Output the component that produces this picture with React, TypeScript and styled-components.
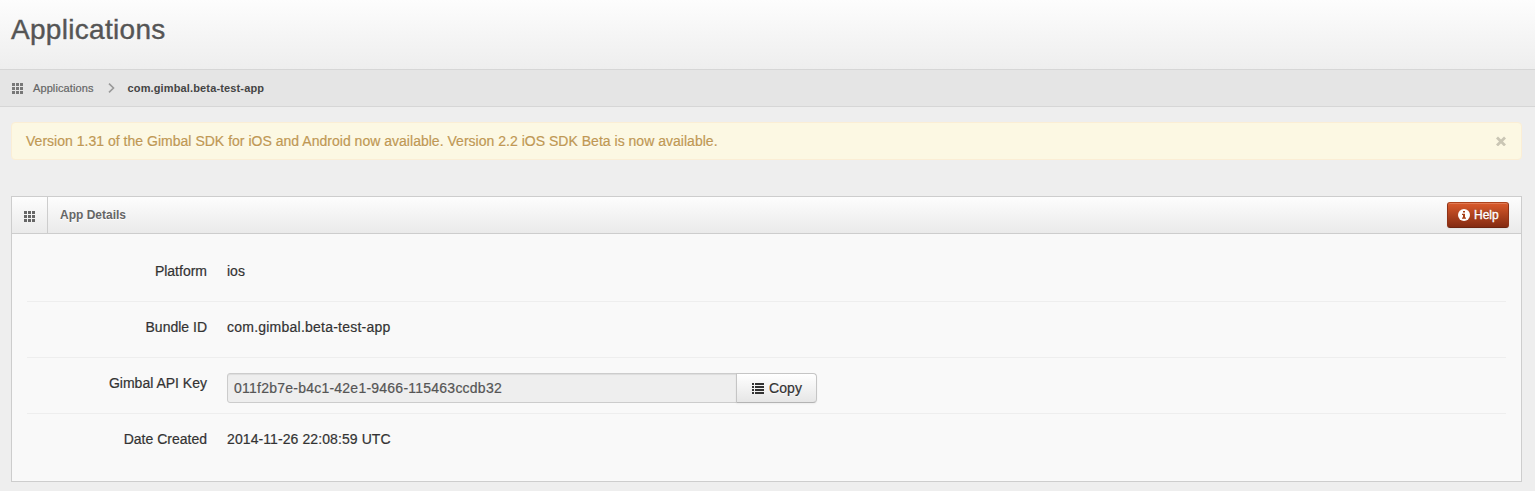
import React from "react";
import styled, { createGlobalStyle } from "styled-components";

const GlobalStyle = createGlobalStyle`
  * { box-sizing: border-box; }
  html, body { margin: 0; background: #eeeeee; }
  body {
    font-family: "Helvetica Neue", "Liberation Sans", Arial, sans-serif;
    font-size: 14px;
    line-height: 20px;
    color: #333333;
    -webkit-text-stroke-width: 0.2px;
  }
`;

const Page = styled.div`
  height: 491px;
  overflow: hidden;
`;

const Header = styled.header`
  height: 69px;
  padding: 10px 0 0 11px;
  background: linear-gradient(#fdfdfd, #eeeeee);
`;

const Title = styled.h1`
  margin: 0;
  font-size: 28px;
  line-height: 40px;
  font-weight: 400;
  letter-spacing: 0.3px;
  color: #555555;
  -webkit-text-stroke-width: 0.4px;
  text-shadow: 0 1px 0 #ffffff;
`;

const Breadcrumb = styled.nav`
  display: flex;
  align-items: center;
  height: 38px;
  padding-left: 12px;
  background: #e5e5e5;
  border-top: 1px solid #d6d6d6;
  border-bottom: 1px solid #d6d6d6;
  font-size: 11px;
`;

const Crumb = styled.a<{ $current?: boolean }>`
  margin-left: ${(p) => (p.$current ? 13 : 10)}px;
  font-weight: ${(p) => (p.$current ? 700 : 400)};
  color: ${(p) => (p.$current ? "#444444" : "#666666")};
  letter-spacing: ${(p) => (p.$current ? "0.14px" : "0.1px")};
  -webkit-text-stroke-width: ${(p) => (p.$current ? "0" : "0.2px")};
`;

const Chevron = styled.svg`
  margin-left: 14px;
  fill: none;
  stroke: #999999;
  stroke-width: 1.6;
`;

const Content = styled.main`
  padding: 15px 13px 0 11px;
`;

const Alert = styled.div`
  display: flex;
  align-items: center;
  justify-content: space-between;
  height: 38px;
  padding: 0 15px 0 14px;
  background: #fcf8e3;
  border: 1px solid #fbeed5;
  border-radius: 4px;
  color: #c09853;
  text-shadow: 0 1px 0 rgba(255, 255, 255, 0.5);
`;

const AlertText = styled.span`
  letter-spacing: 0.019px;
`;

const Panel = styled.section`
  height: 286px;
  margin-top: 36px;
  background: #f9f9f9;
  border: 1px solid #cdcdcd;
`;

const PanelHeader = styled.div`
  display: flex;
  align-items: center;
  height: 37px;
  padding-right: 12px;
  background: linear-gradient(#fdfdfd, #eaeaea);
  border-bottom: 1px solid #cdcdcd;
`;

const PanelIcon = styled.div`
  display: flex;
  align-items: center;
  width: 36px;
  height: 36px;
  padding: 3px 0 0 12px;
  border-right: 1px solid #cdcdcd;
`;

const PanelTitle = styled.h5`
  flex: 1;
  margin: 0 0 0 12px;
  font-size: 12px;
  line-height: 12px;
  color: #666666;
  -webkit-text-stroke-width: 0;
  text-shadow: 0 1px 0 #ffffff;
`;

const HelpButton = styled.button`
  display: flex;
  align-items: center;
  gap: 4px;
  width: 62px;
  height: 26px;
  padding: 0 0 0 10px;
  border: 1px solid #8c3216;
  border-color: #ae421b #8f3317 #6c2410;
  border-radius: 3px;
  background: linear-gradient(#da5a2b, #842b12);
  box-shadow: inset 0 1px 0 rgba(255, 255, 255, 0.2), 0 1px 2px rgba(0, 0, 0, 0.05);
  color: #ffffff;
  font-family: inherit;
  font-size: 12px;
  -webkit-text-stroke-width: 0.35px;
  text-shadow: 0 -1px 0 rgba(0, 0, 0, 0.25);
`;

const Details = styled.dl`
  margin: 0;
  padding: 12px 15px 0;
`;

const Row = styled.div`
  display: flex;
  height: 56px;
  padding-top: 15px;
  border-bottom: 1px solid #eeeeee;
  &:last-child { border-bottom: 0; }
`;

const Label = styled.dt`
  width: 180px;
  text-align: right;
`;

const Value = styled.dd<{ $tracking?: number }>`
  display: flex;
  margin: 0 0 0 20px;
  letter-spacing: ${(p) => p.$tracking ?? 0}px;
`;

const KeyField = styled.input`
  width: 510px;
  height: 30px;
  padding: 0 6px;
  border: 1px solid #cccccc;
  border-radius: 3px 0 0 3px;
  background: #eeeeee;
  box-shadow: inset 0 1px 1px rgba(0, 0, 0, 0.075);
  color: #555555;
  font: inherit;
  letter-spacing: 0.235px;
`;

const CopyButton = styled.button`
  display: flex;
  align-items: center;
  gap: 5px;
  width: 81px;
  height: 30px;
  margin-left: -1px;
  padding: 0 0 0 15px;
  border: 1px solid #c5c5c5;
  border-bottom-color: #b3b3b3;
  border-radius: 0 4px 4px 0;
  background: linear-gradient(#ffffff, #e6e6e6);
  box-shadow: inset 0 1px 0 rgba(255, 255, 255, 0.2), 0 1px 2px rgba(0, 0, 0, 0.05);
  color: #333333;
  font: inherit;
  letter-spacing: 0.1px;
  text-shadow: 0 1px 1px rgba(255, 255, 255, 0.75);
`;

const steps = [0, 4, 8];

const GridIcon = ({ color }: { color: string }) => (
  <svg width="11" height="11" fill={color} shapeRendering="crispEdges">
    {steps.map((y) => steps.map((x) => <rect key={`${x}-${y}`} x={x} y={y} width="3" height="3" />))}
  </svg>
);

const InfoIcon = () => (
  <svg width="12" height="12" viewBox="0 0 12 12">
    <circle cx="6" cy="6" r="6" fill="#ffffff" />
    <path d="M5 2h2v1.6H5zM4 4.8h3v3.6h1v1.3H4V8.4h1V6.1H4z" fill="#a84018" />
  </svg>
);

const ListIcon = () => (
  <svg width="12" height="11" fill="#333333" shapeRendering="crispEdges">
    {[0, 3, 6, 9].map((y) => (
      <React.Fragment key={y}>
        <rect y={y} width="2" height="2" />
        <rect x="3" y={y} width="9" height="2" />
      </React.Fragment>
    ))}
  </svg>
);

const CloseIcon = () => (
  <svg width="10" height="10" viewBox="0 0 10 10" stroke="#cac6b4" strokeWidth="2.8">
    <path d="M1 1.4l8 8M9 1.4l-8 8" />
  </svg>
);

export default function App() {
  return (
    <Page>
      <GlobalStyle />
      <Header>
        <Title>Applications</Title>
      </Header>
      <Breadcrumb>
        <GridIcon color="#777777" />
        <Crumb>Applications</Crumb>
        <Chevron width="7" height="10">
          <path d="M1 .7l4.5 4.3L1 9.3" />
        </Chevron>
        <Crumb $current>com.gimbal.beta-test-app</Crumb>
      </Breadcrumb>
      <Content>
        <Alert>
          <AlertText>
            Version 1.31 of the Gimbal SDK for iOS and Android now available. Version 2.2 iOS SDK Beta is now available.
          </AlertText>
          <CloseIcon />
        </Alert>
        <Panel>
          <PanelHeader>
            <PanelIcon>
              <GridIcon color="#666666" />
            </PanelIcon>
            <PanelTitle>App Details</PanelTitle>
            <HelpButton>
              <InfoIcon />
              Help
            </HelpButton>
          </PanelHeader>
          <Details>
            <Row>
              <Label>Platform</Label>
              <Value>ios</Value>
            </Row>
            <Row>
              <Label>Bundle ID</Label>
              <Value $tracking={0.23}>com.gimbal.beta-test-app</Value>
            </Row>
            <Row>
              <Label>Gimbal API Key</Label>
              <Value>
                <KeyField readOnly value="011f2b7e-b4c1-42e1-9466-115463ccdb32" />
                <CopyButton>
                  <ListIcon />
                  Copy
                </CopyButton>
              </Value>
            </Row>
            <Row>
              <Label>Date Created</Label>
              <Value $tracking={0.09}>2014-11-26 22:08:59 UTC</Value>
            </Row>
          </Details>
        </Panel>
      </Content>
    </Page>
  );
}
